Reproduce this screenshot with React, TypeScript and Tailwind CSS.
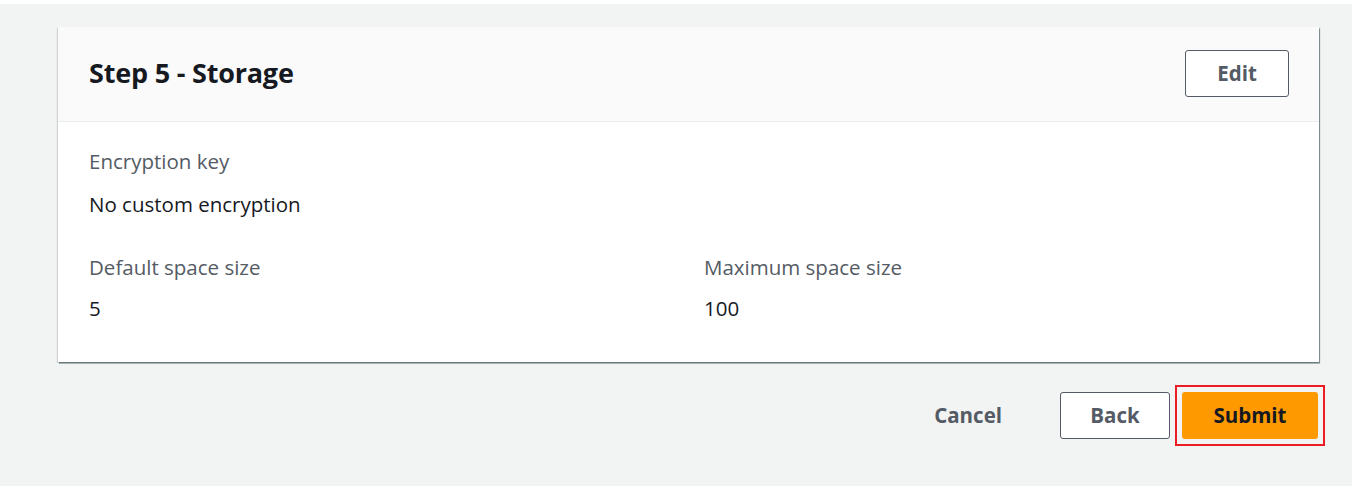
import React from 'react';

const font = { fontFamily: '"Open Sans", "Noto Sans", Arial, sans-serif' };

export default function App() {
  return (
    <div className="w-[1352px] h-[486px] bg-[#f2f3f3] border-t-4 border-white" style={font}>
      <div className="pl-[58px] pr-[33px] pt-[23px]">
        <div className="bg-white shadow-[1px_1px_1px_0_rgba(0,28,36,0.3),1px_2px_0_0_rgba(0,28,36,0.25),-1px_1px_1px_0_rgba(0,28,36,0.15)]">
          <div className="h-[95px] bg-[#fafafa] border-b border-[#eaeded] flex items-center justify-between pl-[31px] pr-[30px] pb-[2px]">
            <h2 className="text-[27px] font-bold text-[#16191f] tracking-[-0.2px]">Step 5 - Storage</h2>
            <button className="w-[104px] h-[47px] border border-[#545b64] rounded-[3px] bg-white text-[#545b64] text-[20.5px] font-bold">
              Edit
            </button>
          </div>
          <div className="pl-[31px] pr-[30px] pt-[24px] pb-[39px] grid grid-cols-2 gap-x-[30px] gap-y-[33px] text-[20.5px]">
            <div className="col-span-2">
              <div className="text-[#545b64] leading-[30px]">Encryption key</div>
              <div className="text-[#16191f] leading-[30px] mt-[13px]">No custom encryption</div>
            </div>
            <div>
              <div className="text-[#545b64] leading-[30px]">Default space size</div>
              <div className="text-[#16191f] leading-[30px] mt-[11px]">5</div>
            </div>
            <div>
              <div className="text-[#545b64] leading-[30px]">Maximum space size</div>
              <div className="text-[#16191f] leading-[30px] mt-[11px]">100</div>
            </div>
          </div>
        </div>
        <div className="flex justify-end items-center mt-[23px]">
          <button className="h-[47px] px-[20px] text-[#545b64] text-[20.5px] font-bold mr-[38px]">Cancel</button>
          <button className="w-[110px] h-[47px] border border-[#545b64] rounded-[3px] bg-white text-[#545b64] text-[20.5px] font-bold mr-[5px]">
            Back
          </button>
          <div className="border-[2.5px] border-[#ec1c24] p-[5px] -mr-[6px]">
            <button className="w-[136px] h-[47px] rounded-[3px] bg-[#ff9900] text-[#16191f] text-[20.5px] font-bold">
              Submit
            </button>
          </div>
        </div>
      </div>
    </div>
  );
}
